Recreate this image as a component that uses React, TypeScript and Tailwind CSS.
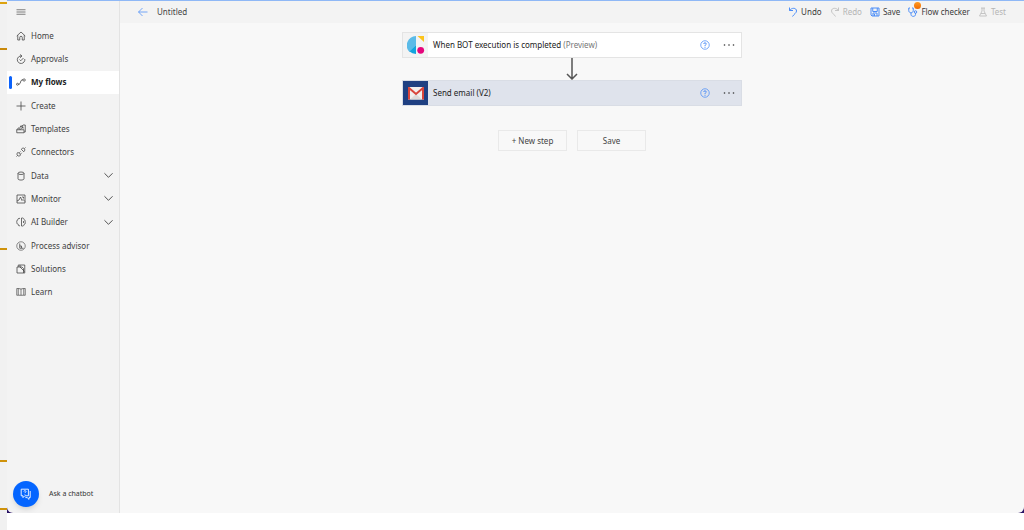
import React, { useState } from "react";

type IconProps = { className?: string; children: React.ReactNode };

function Icon({ className = "size-[10px]", children }: IconProps) {
  return (
    <svg
      viewBox="0 0 20 20"
      className={`shrink-0 ${className}`}
      fill="none"
      stroke="currentColor"
      strokeWidth="1.5"
      aria-hidden="true"
    >
      {children}
    </svg>
  );
}

const navItems = [
  { name: "Home", icon: <path d="M1.500 10 10 2l8.500 8M3.500 8.500V18H7.500v-5a2.500 2.500 0 0 1 5 0v5h4V8.500" /> },
  { name: "Approvals", icon: <path d="M11 4a7.500 7.500 0 1 0 6.500 6M8 1l4 3-4 3.500M7 11l2.500 2.500L15 8" /> },
  {
    name: "My flows",
    icon: (
      <>
        <circle cx="3" cy="14.500" r="2" strokeWidth="1.300" />
        <rect x="14" y="4" width="4.500" height="4" rx="1.500" strokeWidth="1.300" />
        <path d="M5 14.500c6 0 2-9 9-9" />
      </>
    ),
  },
  { name: "Create", icon: <path d="M10 1v18M1 10h18" /> },
  {
    name: "Templates",
    icon: <path d="M9 7V4h3l2-2h4.500v14H16M1.500 17.500V11l5-4v4.500h9.500v6zM1.500 11.500h5M8 11l6-5M10 5.500h4v4" />,
  },
  {
    name: "Connectors",
    icon: (
      <>
        <path d="M4 10.500 9.500 16c-2 2.500-5 2.500-6.500 1s-1.500-4.500 1-6.500zM10.500 4.500l5 5c2.500-2 2.500-5 1-6.500s-4-1-6 1.500zM1 19l2-2M17 3l2-2" />
        <path d="M6.500 11.500 9 9M9 14l2.500-2.500" />
      </>
    ),
  },
  {
    name: "Data",
    expandable: true,
    icon: (
      <>
        <ellipse cx="10" cy="4.500" rx="6" ry="2.500" />
        <path d="M4 4.500v11c0 3.500 12 3.500 12 0v-11" />
      </>
    ),
  },
  {
    name: "Monitor",
    expandable: true,
    icon: <path d="M2 2h16v16H2zM2 14l4-2 3-6 3 7 2-2 4 4M12 6h3v3" />,
  },
  {
    name: "AI Builder",
    expandable: true,
    icon: <path d="M8 3C5 1.500 3.500 4 4 5.500 1 6.500 1 9 2 10c-1 2 0 4 2.500 4.500C4 17 6 18.500 8 17M11 2v16c3 .5 5-.5 5-3 3-1 3-3.500 2-5 1-2 0-4-2-5 0-2-2-3.500-5-3zM15 8v4" />,
  },
  {
    name: "Process advisor",
    icon: (
      <>
        <circle cx="10" cy="10" r="8.500" strokeWidth="1.200" />
        <path d="M7.500 5v9.500H15M7.500 10H11v4" strokeWidth="1.500" />
      </>
    ),
  },
  { name: "Solutions", icon: <path d="M4.500 6V2h13v16M2 6h10l3 3v9H2zM15 18h2.500M8 2v4l9 9" /> },
  { name: "Learn", icon: <path d="M10 4v12.500M10 4C8 3 4 3 1.500 3v13.500h17V3C16 3 12 3 10 4zM4.500 3v13M15.500 3v13" strokeWidth="1.300" /> },
];

function BackdropStrip() {
  return (
    <div className="flex w-[7px] shrink-0 flex-col bg-[#f1f1f1]" aria-hidden="true">
      <div className="h-[2px]" />
      <div className="h-[2px] bg-[#dda30f]" />
      <div className="h-[44px]" />
      <div className="h-[2px] bg-[#c9890a]" />
      <div className="h-[198px]" />
      <div className="h-[2px] bg-[#cf920a]" />
      <div className="h-[210px]" />
      <div className="h-[2px] bg-[#cf920a]" />
      <div className="h-[46px]" />
      <div className="h-[2px] bg-[#cf920a]" />
    </div>
  );
}

function Sidebar() {
  const [active, setActive] = useState("My flows");

  return (
    <aside className="flex w-[113px] shrink-0 flex-col border-r border-[#e3e3e3] bg-[#f3f3f3]">
      <button aria-label="Toggle navigation" className="flex h-[22px] items-center px-[9px] text-[#555]">
        <Icon>
          <path d="M1 5.500h18M1 10h18M1 14.500h18" />
        </Icon>
      </button>
      <nav className="pt-px">
        <ul className="grid h-[280px] grid-rows-12">
          {navItems.map((item) => (
            <li key={item.name} className="flex">
              <a
                href="#"
                onClick={() => setActive(item.name)}
                className={`relative flex flex-1 items-center gap-[5px] pr-[6px] pl-[9px] ${
                  active === item.name ? "bg-white font-bold text-[#222]" : "text-[#3f3f3f]"
                }`}
              >
                {active === item.name && (
                  <span className="absolute inset-y-[5px] left-[2px] w-[3px] rounded-sm bg-[#0b62fb]" />
                )}
                <Icon>{item.icon}</Icon>
                <span className="flex-1">{item.name}</span>
                {item.expandable && (
                  <Icon className="size-[9px]">
                    <path d="m1 5 9 9 9-9" strokeWidth="2" />
                  </Icon>
                )}
              </a>
            </li>
          ))}
        </ul>
      </nav>
      <button className="mt-auto mb-[6px] flex items-center gap-[10px] pl-[6px] text-[7px] text-[#333]">
        <span className="flex size-[26px] items-center justify-center rounded-full bg-[#0465ff] text-white shadow-md">
          <Icon className="size-[12px]">
            <path d="M2 2h12v11H8l-3 3v-3H2zM17 5v11h-2v3l-3-3H9M6.500 6c0-2.500 3.500-2 3.500 0 0 1-1.800 1-1.800 2.500M8.200 10v1" />
          </Icon>
        </span>
        Ask a chatbot
      </button>
    </aside>
  );
}

const toolButton = "flex items-center gap-[3px] text-[#3b3b3b] disabled:text-[#b5b5b5]";

function Toolbar() {
  return (
    <header className="flex h-[22px] items-center justify-between bg-[#f3f3f3] px-[18px]">
      <div className="flex items-center gap-[9px] text-[#444]">
        <button aria-label="Back" className="text-[#4b8df8]">
          <Icon>
            <path d="M19 10H1M9 2l-8 8 8 8" />
          </Icon>
        </button>
        <h1>Untitled</h1>
      </div>
      <div className="flex items-center gap-[8px]">
        <button className={toolButton}>
          <Icon className="size-[10px] text-[#4b8df8]">
            <path d="M3 1v6h7M3 7c4-6 14-6 14 1 0 4-5 6-8 11" strokeWidth="2" />
          </Icon>
          Undo
        </button>
        <button className={toolButton} disabled>
          <Icon>
            <path d="M17 1v6h-7M17 7C13 1 3 1 3 8c0 4 5 6 8 11" />
          </Icon>
          Redo
        </button>
        <button className={toolButton}>
          <Icon className="size-[10px] text-[#4b8df8]">
            <path d="M2 2h16v16H4l-2-2zM5.500 2v7h9V2M6 18v-6h8v6M9 14v4" strokeWidth="2" />
          </Icon>
          Save
        </button>
        <button className={`${toolButton} relative`}>
          <Icon className="size-[10px] text-[#4b8df8]">
            <path d="M4 2H1.500v5c0 6 9 6 9 0V2H8M6 12v3c0 5 9 5 9 0v-3" strokeWidth="2" />
            <circle cx="15" cy="10" r="2.500" strokeWidth="2" />
          </Icon>
          <span className="absolute -top-[4px] left-[6px] size-[7px] rounded-full bg-linear-to-b from-[#ff9a1f] to-[#f06a00]" />
          Flow checker
        </button>
        <button className={toolButton} disabled>
          <Icon>
            <path d="M6 2h8M8 2v6L3 18h14L12 8V2M6 13h8" />
          </Icon>
          Test
        </button>
      </div>
    </header>
  );
}

function BotLogo() {
  return (
    <svg viewBox="0 0 18 20" className="h-[20px] w-[18px]" aria-hidden="true">
      <path d="M9 1v9L2.500 17A10 9.500 0 0 1 9 1z" fill="#5bbbe8" />
      <path d="M9 10v9a10 9 0 0 1-6.500-2.500z" fill="#12a4de" />
      <path d="M10.500 1H17v6z" fill="#fcc41c" />
      <circle cx="13.700" cy="15.300" r="3.400" fill="#e5067c" />
    </svg>
  );
}

function MailLogo() {
  return (
    <svg viewBox="0 0 16 13" className="h-[13px] w-[16px]" aria-hidden="true">
      <path d="M0 0h16v12.500H0z" fill="#f1efee" />
      <path d="M2 12.500 8 7l6 5.500z" fill="#dcdad9" />
      <path d="M1 12.500V1l7 6 7-6v11.500" fill="none" stroke="#d9453b" strokeWidth="2" />
    </svg>
  );
}

type StepCardProps = {
  title: string;
  note?: string;
  logo: React.ReactNode;
  className: string;
  logoClass: string;
};

function StepCard({ title, note, logo, className, logoClass }: StepCardProps) {
  return (
    <section className={`flex h-[26px] w-full max-w-[340px] items-center border ${className}`}>
      <div className={`flex h-full w-[25px] items-center justify-center ${logoClass}`}>{logo}</div>
      <h2 className="flex-1 pl-[5px] text-[#222]">
        {title} {note && <span className="text-[#777]">{note}</span>}
      </h2>
      <button aria-label={`Help for ${title}`} className="text-[#4b8df8]">
        <Icon>
          <circle cx="10" cy="10" r="8.500" />
          <path d="M7.500 8c0-3.500 5-3 5 0 0 1.500-2.500 1.500-2.500 4M10 13.500v2" strokeWidth="2" />
        </Icon>
      </button>
      <button aria-label={`Menu for ${title}`} className="mr-[6px] ml-[13px] text-[#333]">
        <svg viewBox="0 0 12 4" className="h-[4px] w-[12px]" fill="currentColor" aria-hidden="true">
          <circle cx="1.500" cy="2" r="0.800" />
          <circle cx="6" cy="2" r="0.800" />
          <circle cx="10.500" cy="2" r="0.800" />
        </svg>
      </button>
    </section>
  );
}

const stepButton = "h-[21px] w-[69px] border border-[#e9e9e9] text-[#444]";

function Designer() {
  return (
    <main className="flex flex-1 flex-col items-center bg-[#f8f8f8] pt-[9px]">
      <StepCard
        title="When BOT execution is completed"
        note="(Preview)"
        logo={<BotLogo />}
        className="border-[#e4e4e4] bg-white"
        logoClass="bg-[#f3f3f3]"
      />
      <svg viewBox="0 0 12 22" className="h-[22px] w-[12px]" fill="none" stroke="#555" strokeWidth="1.500" aria-hidden="true">
        <path d="M6 0v21M1 16l5 5 5-5" />
      </svg>
      <StepCard
        title="Send email (V2)"
        logo={<MailLogo />}
        className="border-[#d9dde5] bg-[#dfe3ec]"
        logoClass="bg-[#1f4082]"
      />
      <div className="mt-[24px] flex gap-[10px]">
        <button className={stepButton}>+ New step</button>
        <button className={stepButton}>Save</button>
      </div>
    </main>
  );
}

export default function App() {
  return (
    <div className="flex min-h-screen bg-white font-['Noto_Sans',sans-serif] text-[8px] leading-[12px]">
      <BackdropStrip />
      <div className="flex flex-1 flex-col">
        <div className="flex flex-1 bg-[#2a1466]">
          <div className="flex flex-1 overflow-hidden rounded-b-[6px] border-t border-[#8fb8f6]">
            <Sidebar />
            <div className="flex flex-1 flex-col">
              <Toolbar />
              <Designer />
            </div>
          </div>
        </div>
        <footer className="h-[17px] bg-white" />
      </div>
    </div>
  );
}
